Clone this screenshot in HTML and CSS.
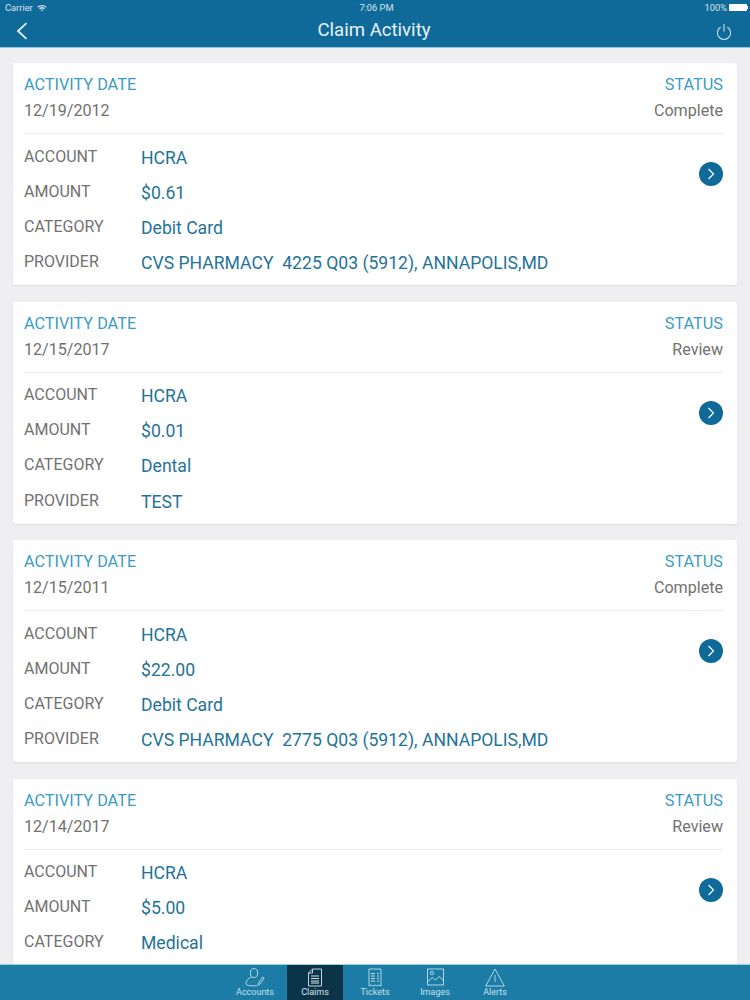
FILE: index.html
```html
<!DOCTYPE html>
<html lang="en">
<head>
    <meta charset="UTF-8">
    <title>Claim Activity</title>
    <link rel="stylesheet" href="styles.css">
</head>
<body>
    <div class="app">
        <header class="top-bar">
            <div class="status-bar">
                <div class="status-left">
                    <span>Carrier</span>
                    <svg class="wifi" viewBox="0 0 12 9" width="10" height="8"><path d="M0.5 3 A8 8 0 0 1 11.5 3 L10.3 4.2 A6.3 6.3 0 0 0 1.7 4.2 Z M2.6 5 A5 5 0 0 1 9.4 5 L8.2 6.2 A3.3 3.3 0 0 0 3.8 6.2 Z M4.6 7 A2 2 0 0 1 7.4 7 L6 8.5 Z" fill="#d5e4ec"/></svg>
                </div>
                <span class="status-time">7:06 PM</span>
                <div class="status-right">
                    <span>100%</span>
                    <span class="battery"></span>
                    <span class="battery-tip"></span>
                </div>
            </div>
            <div class="nav-bar">
                <svg class="back-icon" viewBox="0 0 12 18" width="12" height="18"><path d="M10.5 1.2 L2 9 L10.5 16.8" fill="none" stroke="#e6f0f5" stroke-width="1.8"/></svg>
                <h1>Claim Activity</h1>
                <svg class="power-icon" viewBox="0 0 16 18" width="16" height="18"><path d="M8 1 V8.5 M4.6 4.2 A6.6 6.6 0 1 0 11.4 4.2" fill="none" stroke="#cfe2ec" stroke-width="1.1"/></svg>
            </div>
        </header>

        <main class="claim-list">
            <section class="card">
                <div class="card-head">
                    <div>
                        <div class="head-label">ACTIVITY DATE</div>
                        <div class="head-value">12/19/2012</div>
                    </div>
                    <div class="head-right">
                        <div class="head-label">STATUS</div>
                        <div class="head-value">Complete</div>
                    </div>
                </div>
                <div class="card-body">
                    <div class="rows">
                        <div class="row"><span class="row-label">ACCOUNT</span><span class="row-value">HCRA</span></div>
                        <div class="row"><span class="row-label">AMOUNT</span><span class="row-value">$0.61</span></div>
                        <div class="row"><span class="row-label">CATEGORY</span><span class="row-value">Debit Card</span></div>
                        <div class="row"><span class="row-label">PROVIDER</span><span class="row-value">CVS PHARMACY&nbsp; 4225 Q03 (5912), ANNAPOLIS,MD</span></div>
                    </div>
                    <span class="go-btn"><svg viewBox="0 0 8 12" width="8" height="12"><path d="M1.5 1 L6.5 6 L1.5 11" fill="none" stroke="#fff" stroke-width="1.2"/></svg></span>
                </div>
            </section>

            <section class="card">
                <div class="card-head">
                    <div>
                        <div class="head-label">ACTIVITY DATE</div>
                        <div class="head-value">12/15/2017</div>
                    </div>
                    <div class="head-right">
                        <div class="head-label">STATUS</div>
                        <div class="head-value">Review</div>
                    </div>
                </div>
                <div class="card-body">
                    <div class="rows">
                        <div class="row"><span class="row-label">ACCOUNT</span><span class="row-value">HCRA</span></div>
                        <div class="row"><span class="row-label">AMOUNT</span><span class="row-value">$0.01</span></div>
                        <div class="row"><span class="row-label">CATEGORY</span><span class="row-value">Dental</span></div>
                        <div class="row"><span class="row-label">PROVIDER</span><span class="row-value">TEST</span></div>
                    </div>
                    <span class="go-btn"><svg viewBox="0 0 8 12" width="8" height="12"><path d="M1.5 1 L6.5 6 L1.5 11" fill="none" stroke="#fff" stroke-width="1.2"/></svg></span>
                </div>
            </section>

            <section class="card">
                <div class="card-head">
                    <div>
                        <div class="head-label">ACTIVITY DATE</div>
                        <div class="head-value">12/15/2011</div>
                    </div>
                    <div class="head-right">
                        <div class="head-label">STATUS</div>
                        <div class="head-value">Complete</div>
                    </div>
                </div>
                <div class="card-body">
                    <div class="rows">
                        <div class="row"><span class="row-label">ACCOUNT</span><span class="row-value">HCRA</span></div>
                        <div class="row"><span class="row-label">AMOUNT</span><span class="row-value">$22.00</span></div>
                        <div class="row"><span class="row-label">CATEGORY</span><span class="row-value">Debit Card</span></div>
                        <div class="row"><span class="row-label">PROVIDER</span><span class="row-value">CVS PHARMACY&nbsp; 2775 Q03 (5912), ANNAPOLIS,MD</span></div>
                    </div>
                    <span class="go-btn"><svg viewBox="0 0 8 12" width="8" height="12"><path d="M1.5 1 L6.5 6 L1.5 11" fill="none" stroke="#fff" stroke-width="1.2"/></svg></span>
                </div>
            </section>

            <section class="card">
                <div class="card-head">
                    <div>
                        <div class="head-label">ACTIVITY DATE</div>
                        <div class="head-value">12/14/2017</div>
                    </div>
                    <div class="head-right">
                        <div class="head-label">STATUS</div>
                        <div class="head-value">Review</div>
                    </div>
                </div>
                <div class="card-body">
                    <div class="rows">
                        <div class="row"><span class="row-label">ACCOUNT</span><span class="row-value">HCRA</span></div>
                        <div class="row"><span class="row-label">AMOUNT</span><span class="row-value">$5.00</span></div>
                        <div class="row"><span class="row-label">CATEGORY</span><span class="row-value">Medical</span></div>
                    </div>
                    <span class="go-btn"><svg viewBox="0 0 8 12" width="8" height="12"><path d="M1.5 1 L6.5 6 L1.5 11" fill="none" stroke="#fff" stroke-width="1.2"/></svg></span>
                </div>
            </section>
        </main>

        <nav class="tab-bar">
            <div class="tab">
                <svg viewBox="0 0 20 19" width="20" height="19"><g fill="none" stroke="#c2e0ea" stroke-width="0.9"><ellipse cx="9" cy="5" rx="3.6" ry="4.5"/><path d="M6.5 9 C3 10.5 1 12.5 1 15.5 C1 17.3 3 17.8 9 17.8 C11 17.8 12 17.7 13 17.3"/><path d="M13.5 15 L17.8 9 L19.2 10 L15 16 L13.2 16.8 Z"/></g></svg>
                <span>Accounts</span>
            </div>
            <div class="tab tab-active">
                <svg viewBox="0 0 16 19" width="16" height="19"><g fill="none" stroke="#d5e6ed" stroke-width="0.9"><path d="M5.5 1 H14.5 V18 H1.5 V5 Z M5.5 1 V5 H1.5"/><path d="M4 8 H12 M4 10.5 H12 M4 13 H12 M4 15 H12" stroke-width="1.2"/></g></svg>
                <span>Claims</span>
            </div>
            <div class="tab">
                <svg viewBox="0 0 14 19" width="14" height="19"><g fill="none" stroke="#c2e0ea" stroke-width="0.9"><path d="M1 1 H13 V18 L11 17 L9 18 L7 17 L5 18 L3 17 L1 18 Z"/><path d="M3 5.5 H7 M3 8 H7 M3 10.5 H7 M3 13 H7 M9 5.5 H11 M9 8 H11 M9 10.5 H11 M9 13 H11" stroke-width="1.1"/></g></svg>
                <span>Tickets</span>
            </div>
            <div class="tab">
                <svg viewBox="0 0 17 19" width="17" height="19"><g fill="none" stroke="#c2e0ea" stroke-width="0.9"><rect x="0.5" y="1" width="16" height="16"/><circle cx="5" cy="5" r="1.6"/><path d="M1 13.5 L5.5 9.5 L8.5 12 L12 8.5 L16.5 12.5"/></g></svg>
                <span>Images</span>
            </div>
            <div class="tab">
                <svg viewBox="0 0 20 19" width="20" height="19"><g fill="none" stroke="#c2e0ea" stroke-width="0.9"><path d="M10 1 L19.3 18 H0.7 Z"/><path d="M10 7 V14"/></g></svg>
                <span>Alerts</span>
            </div>
        </nav>
    </div>
</body>
</html>
```

FILE: styles.css
```css
:root {
    --bar-color: #0f6a99;
    --label-blue: #3a9cc6;
    --value-blue: #1f7399;
    --text-gray: #717171;
    --page-color: #efeff1;
}

* {
    box-sizing: border-box;
}

body {
    margin: 0;
    font-family: Roboto, "Liberation Sans", sans-serif;
    background: var(--page-color);
}

.app {
    display: flex;
    flex-direction: column;
    height: 100vh;
    overflow: hidden;
}

.top-bar {
    flex: none;
    height: 48px;
    background: var(--bar-color);
    border-bottom: 1px solid #8fc4e0;
    color: #fff;
}

.status-bar {
    display: grid;
    grid-template-columns: 1fr auto 1fr;
    align-items: center;
    height: 15px;
    padding: 0 2px 0 5px;
    font-size: 9.3px;
    color: #d5e4ec;
}

.status-left {
    display: flex;
    align-items: center;
    gap: 4px;
}

.status-right {
    display: flex;
    align-items: center;
    justify-content: flex-end;
    gap: 2px;
}

.battery {
    width: 18px;
    height: 7px;
    background: #fff;
    border-radius: 1px;
}

.battery-tip {
    width: 1px;
    height: 3px;
    margin-left: -2px;
    background: #fff;
}

.nav-bar {
    display: flex;
    align-items: center;
    justify-content: space-between;
    height: 32px;
    padding: 0 18px 0 16px;
}

.nav-bar h1 {
    margin: 0 0 3px 4px;
    font-size: 18.6px;
    font-weight: 400;
    color: #e9f2f6;
}

.power-icon {
    margin-top: 1px;
}

.claim-list {
    flex: 1;
    min-height: 0;
    overflow: hidden;
    display: flex;
    flex-direction: column;
    gap: 16.5px;
    padding: 15px 13px 0;
}

.card {
    flex: none;
    height: 222px;
    background: #fff;
    border-radius: 3px;
    box-shadow: 0 1px 2px rgba(0, 0, 0, 0.08);
    padding: 0 14px 0 11px;
}

.card-head {
    display: flex;
    justify-content: space-between;
    height: 71px;
    padding-top: 12px;
    border-bottom: 1px solid #ececee;
}

.head-right {
    text-align: right;
}

.head-label {
    font-size: 16.25px;
    line-height: 20px;
    color: var(--label-blue);
}

.head-value {
    margin-top: 6px;
    font-size: 16.1px;
    line-height: 20px;
    color: var(--text-gray);
}

.card-body {
    display: flex;
    align-items: flex-start;
    justify-content: space-between;
}

.rows {
    display: flex;
    flex-direction: column;
    gap: 15.2px;
    padding-top: 13.5px;
}

.row {
    display: flex;
    align-items: center;
    height: 20px;
}

.row-label {
    width: 117px;
    font-size: 16px;
    color: var(--text-gray);
    position: relative;
    top: -1.5px;
}

.row-value {
    font-size: 17.6px;
    color: var(--value-blue);
}

.go-btn {
    display: flex;
    align-items: center;
    justify-content: center;
    width: 24px;
    height: 24px;
    border-radius: 50%;
    background: var(--bar-color);
    margin-top: 28px;
}

.tab-bar {
    flex: none;
    height: 36px;
    display: flex;
    justify-content: center;
    background: #1c7ca6;
    border-top: 1px solid #9ad0e0;
}

.tab {
    width: 60px;
    display: flex;
    flex-direction: column;
    align-items: center;
    padding-top: 3px;
    font-size: 9px;
    line-height: 11px;
    color: #c2e0ea;
}

.tab-active {
    width: 56px;
    margin: 0 2px;
    background: #0c3448;
    color: #d5e6ed;
}
```
